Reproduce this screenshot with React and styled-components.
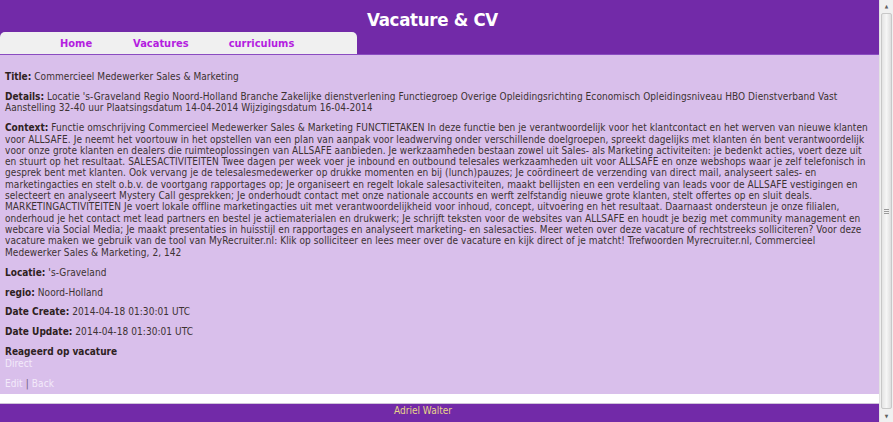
import React from 'react';
import styled, { createGlobalStyle } from 'styled-components';

const Global = createGlobalStyle`
  html, body {
    margin: 0;
    padding: 0;
    background: #ffffff;
  }
  body {
    font-family: "DejaVu Sans Condensed", "DejaVu Sans", Verdana, sans-serif;
    font-stretch: condensed;
    font-size: 10px;
    color: #3c3232;
  }
`;

const Shell = styled.div`
  display: flex;
  height: 100vh;
  overflow: hidden;
`;

const Page = styled.div`
  flex: 1;
  min-width: 0;
  display: flex;
  flex-direction: column;
  & > * {
    flex: none;
  }
`;

const Header = styled.header`
  background: #722aa8;
  height: 54px;
  display: flex;
  flex-direction: column;
  border-bottom: 1px solid #8a4cc0;
`;

const SiteTitle = styled.h1`
  margin: 0;
  height: 31px;
  line-height: 40px;
  text-align: center;
  color: #ffffff;
  font-size: 18.5px;
  letter-spacing: -0.3px;
  font-weight: bold;
  padding-right: 14px;
`;

const Nav = styled.nav`
  margin-top: auto;
  width: 357px;
  height: 22px;
  background: #f0f0f0;
  border-radius: 5px 5px 0 0;
  display: flex;
  align-items: center;
  padding-left: 60px;
  box-sizing: border-box;
`;

const NavLink = styled.a`
  color: #b41ee0;
  font-weight: bold;
  font-size: 11px;
  text-decoration: none;
  margin-right: ${p => p.$gap}px;
`;

const Content = styled.main`
  background: #d9bfeb;
  padding: 16px 6px 5px 5px;
  letter-spacing: 0.07px;
`;

const Field = styled.p`
  margin: 0 0 8.7px;
  line-height: 11.3px;
`;

const Label = styled.b`
  color: #2e2222;
  letter-spacing: 0;
`;

const Actions = styled.div`
  line-height: 11.3px;
`;

const LightLink = styled.a`
  color: #f3eafa;
  text-decoration: none;
`;

const Sep = styled.span`
  color: #6a5a78;
  margin: 0 3px;
`;

const Gap = styled.div`
  height: 9px;
  background: #ffffff;
  border-bottom: 1px solid #cfc3d8;
`;

const Footer = styled.footer`
  background: #722aa8;
  color: #e8d48a;
  text-align: center;
  padding: 1px 33px 40px 0;
  line-height: 12px;
`;

const Scrollbar = styled.aside`
  width: 14px;
  flex: none;
  background: #f0f0f0;
  border-left: 1px solid #e2e2e2;
  box-sizing: border-box;
  display: flex;
  flex-direction: column;
  align-items: center;
`;

const Arrow = styled.div`
  height: 12px;
  width: 100%;
  display: flex;
  align-items: center;
  justify-content: center;
  color: #606060;
  font-size: 5px;
  line-height: 1;
`;

const Thumb = styled.div`
  flex: 1;
  width: 11px;
  margin: 1px 0;
  background: linear-gradient(90deg, #e4e4e4, #f6f6f6 50%, #dedede);
  border: 1px solid #c8c8c8;
  border-radius: 2px;
  box-sizing: border-box;
  display: flex;
  align-items: center;
  justify-content: center;
`;

const Grip = styled.div`
  width: 5px;
  height: 5px;
  border-top: 1px solid #9a9a9a;
  border-bottom: 1px solid #9a9a9a;
  box-sizing: border-box;
  position: relative;
  &::after {
    content: '';
    position: absolute;
    left: 0;
    right: 0;
    top: 1px;
    border-top: 1px solid #9a9a9a;
  }
`;

const context = "Functie omschrijving Commercieel Medewerker Sales & Marketing FUNCTIETAKEN In deze functie ben je verantwoordelijk voor het klantcontact en het werven van nieuwe klanten voor ALLSAFE. Je neemt het voortouw in het opstellen van een plan van aanpak voor leadwerving onder verschillende doelgroepen, spreekt dagelijks met klanten én bent verantwoordelijk voor onze grote klanten en dealers die ruimteoplossingen van ALLSAFE aanbieden. Je werkzaamheden bestaan zowel uit Sales- als Marketing activiteiten: je bedenkt acties, voert deze uit en stuurt op het resultaat. SALESACTIVITEITEN Twee dagen per week voer je inbound en outbound telesales werkzaamheden uit voor ALLSAFE en onze webshops waar je zelf telefonisch in gesprek bent met klanten. Ook vervang je de telesalesmedewerker op drukke momenten en bij (lunch)pauzes; Je coördineert de verzending van direct mail, analyseert sales- en marketingacties en stelt o.b.v. de voortgang rapportages op; Je organiseert en regelt lokale salesactiviteiten, maakt bellijsten en een verdeling van leads voor de ALLSAFE vestigingen en selecteert en analyseert Mystery Call gesprekken; Je onderhoudt contact met onze nationale accounts en werft zelfstandig nieuwe grote klanten, stelt offertes op en sluit deals. MARKETINGACTIVITEITEN Je voert lokale offline marketingacties uit met verantwoordelijkheid voor inhoud, concept, uitvoering en het resultaat. Daarnaast ondersteun je onze filialen, onderhoud je het contact met lead partners en bestel je actiematerialen en drukwerk; Je schrijft teksten voor de websites van ALLSAFE en houdt je bezig met community management en webcare via Social Media; Je maakt presentaties in huisstijl en rapportages en analyseert marketing- en salesacties. Meer weten over deze vacature of rechtstreeks solliciteren? Voor deze vacature maken we gebruik van de tool van MyRecruiter.nl: Klik op solliciteer en lees meer over de vacature en kijk direct of je matcht! Trefwoorden Myrecruiter.nl, Commercieel Medewerker Sales & Marketing, 2, 142";

const fields = [
  ['Title', 'Commercieel Medewerker Sales & Marketing'],
  ['Details', "Locatie 's-Graveland Regio Noord-Holland Branche Zakelijke dienstverlening Functiegroep Overige Opleidingsrichting Economisch Opleidingsniveau HBO Dienstverband Vast Aanstelling 32-40 uur Plaatsingsdatum 14-04-2014 Wijzigingsdatum 16-04-2014"],
  ['Context', context],
  ['Locatie', "'s-Graveland"],
  ['regio', 'Noord-Holland'],
  ['Date Create', '2014-04-18 01:30:01 UTC'],
  ['Date Update', '2014-04-18 01:30:01 UTC'],
];

export default function App() {
  return (
    <Shell>
      <Global />
      <Page>
        <Header>
          <SiteTitle>Vacature &amp; CV</SiteTitle>
          <Nav>
            <NavLink href="#" $gap={41}>Home</NavLink>
            <NavLink href="#" $gap={40}>Vacatures</NavLink>
            <NavLink href="#" $gap={0}>curriculums</NavLink>
          </Nav>
        </Header>
        <Content>
          {fields.map(([label, value]) => (
            <Field key={label}>
              <Label>{label}:</Label> {value}
            </Field>
          ))}
          <Field>
            <Label>Reageerd op vacature</Label>
            <br />
            <LightLink href="#">Direct</LightLink>
          </Field>
          <Actions>
            <LightLink href="#">Edit</LightLink>
            <Sep>|</Sep>
            <LightLink href="#">Back</LightLink>
          </Actions>
        </Content>
        <Gap />
        <Footer>Adriel Walter</Footer>
      </Page>
      <Scrollbar>
        <Arrow>▲</Arrow>
        <Thumb>
          <Grip />
        </Thumb>
        <Arrow>▼</Arrow>
      </Scrollbar>
    </Shell>
  );
}
